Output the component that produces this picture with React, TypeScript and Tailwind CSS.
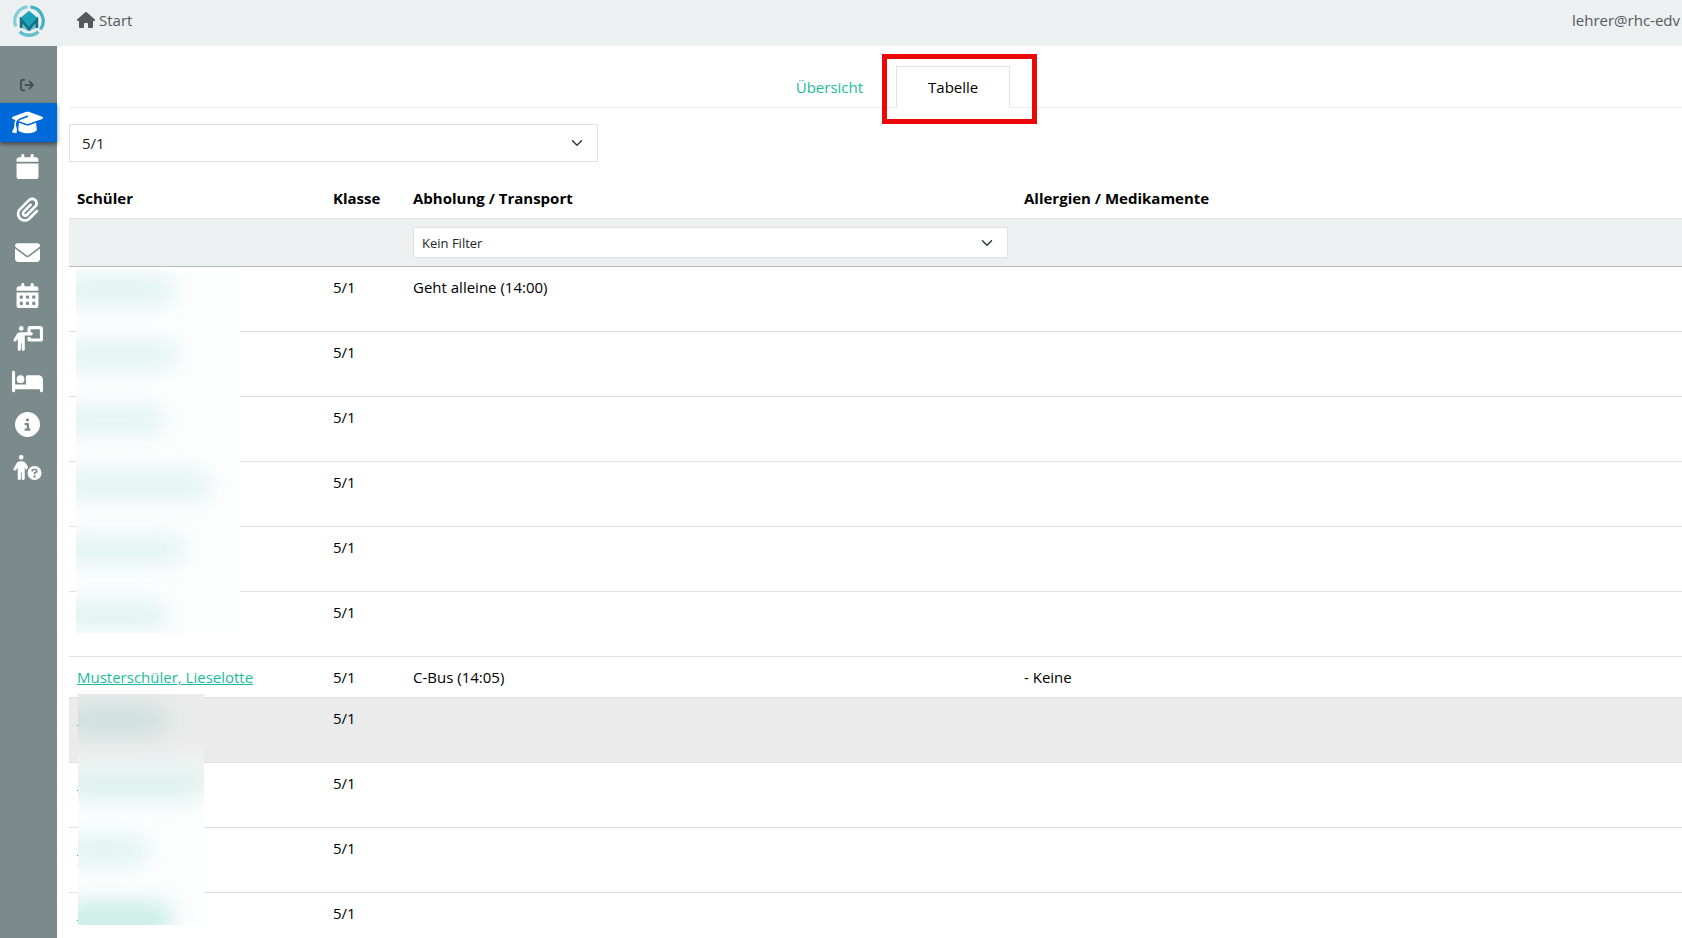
import React, { useState } from 'react';
import {
    FaHouse,
    FaArrowRightFromBracket,
    FaGraduationCap,
    FaCalendar,
    FaPaperclip,
    FaEnvelope,
    FaCalendarDays,
    FaPersonChalkboard,
    FaBed,
    FaCircleInfo,
    FaPersonCircleQuestion,
} from 'react-icons/fa6';
import type { IconType } from 'react-icons';

interface Student {
    name?: string;
    klasse: string;
    transport?: string;
    allergies?: string;
    highlighted?: boolean;
    edge?: boolean;
}

const NAV_ITEMS: { label: string; icon: IconType; active?: boolean }[] = [
    { label: 'Schüler', icon: FaGraduationCap, active: true },
    { label: 'Kalender', icon: FaCalendar },
    { label: 'Dateien', icon: FaPaperclip },
    { label: 'Nachrichten', icon: FaEnvelope },
    { label: 'Termine', icon: FaCalendarDays },
    { label: 'Unterricht', icon: FaPersonChalkboard },
    { label: 'Krankmeldungen', icon: FaBed },
    { label: 'Informationen', icon: FaCircleInfo },
    { label: 'Hilfe', icon: FaPersonCircleQuestion },
];

const STUDENTS: Student[] = [
    { klasse: '5/1', transport: 'Geht alleine (14:00)' },
    { klasse: '5/1' },
    { klasse: '5/1' },
    { klasse: '5/1' },
    { klasse: '5/1' },
    { klasse: '5/1' },
    { name: 'Musterschüler, Lieselotte', klasse: '5/1', transport: 'C-Bus (14:05)', allergies: '- Keine' },
    { klasse: '5/1', highlighted: true, edge: true },
    { klasse: '5/1', edge: true },
    { klasse: '5/1', edge: true },
    { klasse: '5/1', edge: true },
];

const Logo = () => (
    <svg viewBox="0 0 30 30" className="h-8 w-8" fill="none" aria-hidden="true">
        <path d="M2.6 20A13.300 13.300 0 0 1 13.600 1.800" stroke="#84cdd8" strokeWidth="3" />
        <path d="M16.400 1.800A13.300 13.300 0 0 1 25.700 22.900" stroke="#3fb2c4" strokeWidth="3" />
        <path d="M23.800 25A13.300 13.300 0 0 1 6.200 25" stroke="#62bfce" strokeWidth="3.200" />
        <path d="M15 5.500 23.500 12.500V20L15 24.500 6.500 20V12.500Z" fill="#1ba3b8" />
        <path d="M8.500 21.500V16L15 24.500 21.500 16v5.500L15 24.500Z" fill="#6cc3d0" />
        <path d="M7.600 21.500V14L15 22.500 22.400 14V21.500" stroke="#17707f" strokeWidth="2.400" />
    </svg>
);

const Chevron = () => (
    <svg viewBox="0 0 16 16" className="pointer-events-none absolute right-[13px] h-3 w-4" fill="none" stroke="#343a40" strokeWidth="2" strokeLinecap="round" strokeLinejoin="round" aria-hidden="true">
        <path d="m2 5 6 6 6-6" />
    </svg>
);

// Blurred patches lying over the student names
const NameMask1 = () => (
    <div className="absolute top-[92px] left-[7px] flex h-[363px] w-[164px] flex-col gap-[41px] overflow-hidden bg-[#fdfefe] pt-2">
        <span className="-ml-4 h-6 w-[112px] shrink-0 bg-[#d9f1ec] blur-md" />
        <span className="-ml-4 h-6 w-[116px] shrink-0 bg-[#dbf2ed] blur-md" />
        <span className="-ml-4 h-6 w-[102px] shrink-0 bg-[#dbf2ed] blur-md" />
        <span className="-ml-4 h-6 w-[149px] shrink-0 bg-[#dbf2ed] blur-md" />
        <span className="-ml-4 h-6 w-[122px] shrink-0 bg-[#dbf2ed] blur-md" />
        <span className="-ml-4 h-6 w-[104px] shrink-0 bg-[#d9f1ec] blur-md" />
    </div>
);

const NameMask2 = () => (
    <div className="absolute top-[516px] left-[9px] flex h-[231px] w-[126px] flex-col gap-[41px] overflow-hidden bg-linear-to-b from-[#ebebeb] from-20% to-[#fdfefe] to-45% pt-3.5">
        <span className="-ml-4 h-6 w-[102px] shrink-0 bg-[#c6ded8] blur-md" />
        <span className="-ml-4 h-6 w-[144px] shrink-0 bg-[#d6f0ea] blur-md" />
        <span className="-ml-4 h-6 w-[84px] shrink-0 bg-[#d9f1ec] blur-md" />
        <span className="-ml-4 h-8 w-[108px] shrink-0 bg-[#c4ebe2] blur-md" />
    </div>
);

const App: React.FC = () => {
    const [klasse, setKlasse] = useState('5/1');
    const [filter, setFilter] = useState('none');

    return (
        <div className="flex h-screen flex-col overflow-hidden bg-white font-['Segoe_UI','Open_Sans',sans-serif] text-[15px] leading-6 text-black">
            {/* Header */}
            <header className="flex h-[46px] shrink-0 items-center bg-[#ecf0f1] text-[#55595c]">
                <div className="flex w-[57px] shrink-0 justify-center pb-1">
                    <Logo />
                </div>
                <a href="#start" className="ml-5 flex items-center gap-1 pb-1.5">
                    <FaHouse className="h-4 w-[18px]" />
                    Start
                </a>
                <span className="ml-auto pr-0.5 pb-1.5 whitespace-nowrap">lehrer@rhc-edv</span>
            </header>

            <div className="flex min-h-0 flex-1">
                {/* Sidebar */}
                <nav className="flex w-[57px] shrink-0 flex-col gap-1 bg-[#7b8a8b]">
                    <button type="button" aria-label="Abmelden" className="flex h-[53px] items-end justify-center pr-[3px] pb-[7px] text-[#444b4c]">
                        <FaArrowRightFromBracket className="h-3.5 w-3.5" />
                    </button>
                    {NAV_ITEMS.map(({ label, icon: Icon, active }) => (
                        <a
                            key={label}
                            href="#"
                            aria-label={label}
                            className={`flex h-[39px] shrink-0 items-center justify-center pr-[3px] text-white ${active ? 'bg-[#0069d9] shadow-[0_2px_4px_rgba(0,0,0,0.5)]' : 'pt-px'}`}
                        >
                            <Icon className="h-[25px] w-[31px]" />
                        </a>
                    ))}
                </nav>

                {/* Content */}
                <main className="-mr-[34px] flex-1 px-3 pt-5">
                    <div className="mb-4 flex justify-center border-b border-[#ecf0f1]">
                        <a href="#uebersicht" className="-mb-px border border-transparent px-8 py-2 text-[#18bc9c]">
                            Übersicht
                        </a>
                        <a href="#tabelle" className="relative -mb-px border border-[#dee2e6] border-b-white px-[31px] py-2">
                            Tabelle
                            <span className="absolute -top-[13px] -right-7 -bottom-[17px] -left-[15px] border-5 border-[#eb0808]" />
                        </a>
                    </div>

                    <div className="relative mb-4 flex w-[529px] items-center">
                        <select
                            aria-label="Klasse"
                            value={klasse}
                            onChange={(e) => setKlasse(e.target.value)}
                            className="h-[38px] w-full appearance-none border border-[#dee2e6] bg-white px-3 text-[#212529]"
                        >
                            <option value="5/1">5/1</option>
                        </select>
                        <Chevron />
                    </div>

                    <div className="relative">
                        <table className="w-full table-fixed border-collapse text-left">
                            <thead>
                                <tr className="border-b border-[#dee2e6]">
                                    <th className="w-64 p-2">Schüler</th>
                                    <th className="w-20 p-2">Klasse</th>
                                    <th className="w-[611px] p-2">Abholung / Transport</th>
                                    <th className="p-2">Allergien / Medikamente</th>
                                </tr>
                                <tr className="border-b border-[#b5bdbd] bg-[#ecf0f1]">
                                    <td />
                                    <td />
                                    <td className="p-2">
                                        <div className="relative flex items-center">
                                            <select
                                                aria-label="Filter Abholung / Transport"
                                                value={filter}
                                                onChange={(e) => setFilter(e.target.value)}
                                                className="h-[31px] w-full appearance-none border border-[#dee2e6] bg-white px-2 text-[13px] text-[#212529]"
                                            >
                                                <option value="none">Kein Filter</option>
                                            </select>
                                            <Chevron />
                                        </div>
                                    </td>
                                    <td />
                                </tr>
                            </thead>
                            <tbody>
                                {STUDENTS.map((s, idx) => (
                                    <tr
                                        key={idx}
                                        className={`border-b border-[#dee2e6] align-top ${s.name ? 'h-[41px]' : 'h-[65px]'} ${s.highlighted ? 'bg-[#ebebeb]' : ''}`}
                                    >
                                        <td className="p-2">
                                            {s.name && <a href="#schueler" className="text-[#18bc9c] underline">{s.name}</a>}
                                            {s.edge && <span className="block h-5 w-px border-b border-[#18bc9c]" />}
                                        </td>
                                        <td className="p-2">{s.klasse}</td>
                                        <td className="p-2">{s.transport}</td>
                                        <td className="p-2">{s.allergies}</td>
                                    </tr>
                                ))}
                            </tbody>
                        </table>
                        <NameMask1 />
                        <NameMask2 />
                    </div>
                </main>
            </div>
        </div>
    );
};

export default App;
